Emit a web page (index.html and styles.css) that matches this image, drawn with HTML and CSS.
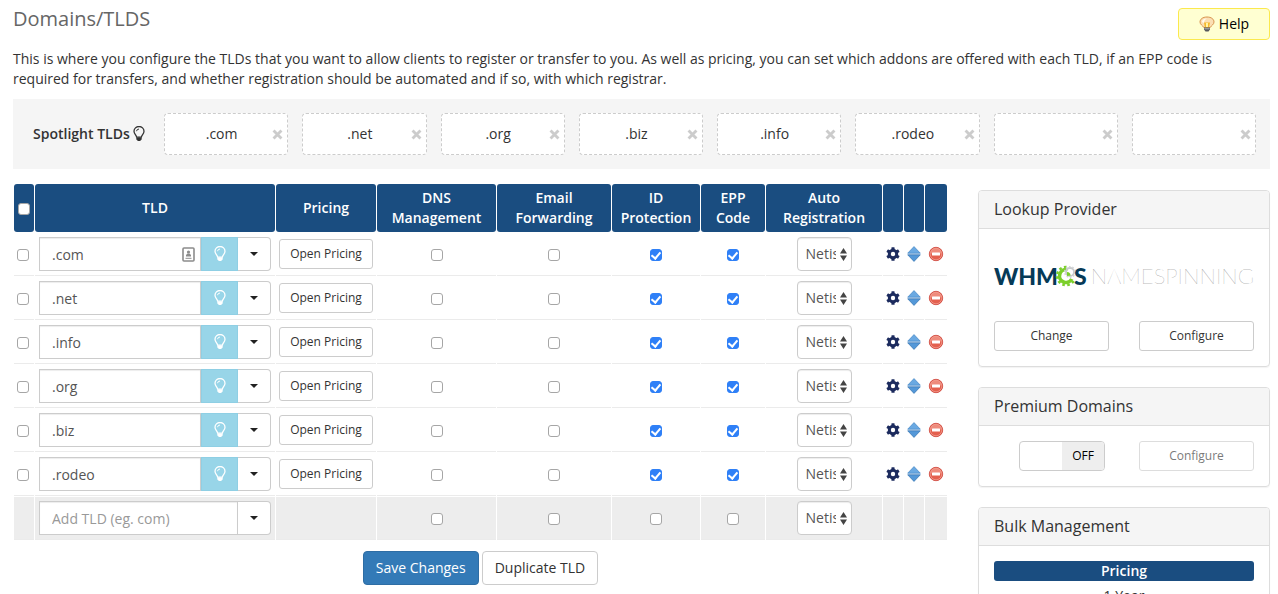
FILE: index.html
```html
<!DOCTYPE html>
<html lang="en">
<head>
<meta charset="utf-8">
<title>Domains/TLDS</title>
<link rel="stylesheet" href="styles.css">
</head>
<body>
<svg class="sprite" aria-hidden="true">
  <symbol id="bulb" viewBox="0 0 12 16">
    <path d="M3.6 11.2C3.4 8.9 1 8 1 5.200a5 4.700 0 0 1 10 0C11 8 8.600 8.900 8.400 11.200Z" fill="none" stroke="currentColor" stroke-width="1.300"/>
    <path d="M3.500 5.200Q3.700 3.200 6 3" fill="none" stroke="currentColor" stroke-width="1"/>
    <path d="M3.300 11.500h5.400v2.200H8L7.300 15H4.700L4 13.700H3.300Z" fill="currentColor"/>
  </symbol>
  <symbol id="cross" viewBox="0 0 10 10">
    <path d="M1.400 1.400 8.600 8.600M8.600 1.400 1.400 8.600" fill="none" stroke="currentColor" stroke-width="2.600"/>
  </symbol>
  <symbol id="caret" viewBox="0 0 8 4"><path d="M0 0h8L4 4Z" fill="currentColor"/></symbol>
  <symbol id="gear" viewBox="-7 -7 14 14">
    <g fill="#1c2b5e">
      <rect x="-1.600" y="-6.800" width="3.200" height="13.600" rx=".6"/>
      <rect x="-1.600" y="-6.800" width="3.200" height="13.600" rx=".6" transform="rotate(60)"/>
      <rect x="-1.600" y="-6.800" width="3.200" height="13.600" rx=".6" transform="rotate(120)"/>
      <circle r="5.200"/>
    </g>
    <circle r="2.200" fill="#fff"/>
  </symbol>
  <symbol id="sort" viewBox="0 0 14 16">
    <path d="M7 .6 13.300 7.200H.7Z" fill="#6aa9e2" stroke="#4a8cc9" stroke-width=".8"/>
    <path d="M.7 8.800H13.300L7 15.400Z" fill="#5498d8" stroke="#3a78b5" stroke-width=".8"/>
  </symbol>
  <symbol id="remove" viewBox="0 0 16 16">
    <circle cx="8" cy="8" r="6.700" fill="#e4604f" stroke="#cf4a3f" stroke-width=".9"/>
    <path d="M2.500 7.500a5.500 5.500 0 0 1 11 0Z" fill="#ee8b7c"/>
    <circle cx="8" cy="8" r="5.800" fill="none" stroke="#f4a397" stroke-width=".7"/>
    <rect x="4" y="6.600" width="8" height="2.800" rx=".5" fill="#fff"/>
  </symbol>
</svg>

<header class="page-head">
  <h1 class="page-title">Domains/TLDS</h1>
  <button type="button" class="help">
    <svg width="16" height="16" viewBox="0 0 16 16" aria-hidden="true">
      <path d="M8 1C3.600 1 1 3.200 1 6c0 2.600 2.600 3.300 3.800 5.500h6.400C12.400 9.300 15 8.600 15 6c0-2.800-2.600-5-7-5Z" fill="#fbdfb4" stroke="#d9954f"/>
      <path d="M3 6Q3.300 2.800 8 2.600 5 4 5 7Z" fill="#fffaf0"/>
      <path d="M5 6.500h6l-.8 5H5.800Z" fill="#f5b92e"/>
      <path d="M8 7v4" stroke="#fff3a5" stroke-width="2"/>
      <path d="M5 11.500h6v2L9.500 15.500h-3L5 13.500Z" fill="#55585d"/>
      <path d="M5.300 12.800h5.400" stroke="#c9cdd2" stroke-width=".8"/>
    </svg>
    Help
  </button>
</header>

<p class="intro">This is where you configure the TLDs that you want to allow clients to register or transfer to you. As well as pricing, you can set which addons are offered with each TLD, if an EPP code is required for transfers, and whether registration should be automated and if so, with which registrar.</p>

<section class="spotlight">
  <div class="spotlight-label">Spotlight TLDs <svg class="bulb" width="12" height="16"><use href="#bulb"/></svg></div>
  <ul class="slots" id="slots"></ul>
</section>

<div class="columns">
  <form class="main">
    <table class="tlds">
      <colgroup>
        <col class="w-tick"><col><col class="w-pricing"><col class="w-dns"><col class="w-email"><col class="w-id"><col class="w-epp"><col class="w-auto"><col class="w-icon"><col class="w-icon"><col class="w-last">
      </colgroup>
      <thead>
        <tr>
          <th><input type="checkbox" class="tick" aria-label="Select all"></th>
          <th>TLD</th><th>Pricing</th><th>DNS Management</th><th>Email Forwarding</th><th>ID Protection</th><th>EPP Code</th><th>Auto Registration</th><th></th><th></th><th></th>
        </tr>
      </thead>
      <tbody id="rows"></tbody>
    </table>
    <div class="actions">
      <button type="button" class="btn btn-primary">Save Changes</button>
      <button type="button" class="btn">Duplicate TLD</button>
    </div>
  </form>

  <aside class="side">
    <section class="panel">
      <h2 class="panel-title">Lookup Provider</h2>
      <div class="panel-body">
        <div class="logo">
          <span class="logo-bold">WHM</span>
          <svg class="logo-gear" width="22" height="22" viewBox="-11 -11 22 22" aria-label="C">
            <g fill="none" stroke="#7ccf2b">
              <path d="M1.500-6.300A6.500 6.500 0 1 0 5.800 3" stroke-width="3.600"/>
              <path d="M.5-9.100A9.100 9.100 0 1 0 8 4.400" stroke-width="2.400" stroke-dasharray="2.600 2.400"/>
            </g>
            <circle cx="4" cy="-4" r="4" fill="none" stroke="#c9cbcd" stroke-width="1.800"/>
            <circle cx="4" cy="-4" r="5.300" fill="none" stroke="#d2d4d6" stroke-width="1.400" stroke-dasharray="1.600 1.730"/>
            <path d="M1 0V-4A3.500 3.500 0 0 1 4.500-.5Z" fill="#7ccf2b"/>
          </svg>
          <span class="logo-bold">S</span>
          <span class="logo-thin">NAMESPINNING</span>
        </div>
        <div class="pair">
          <button type="button" class="btn btn-sm">Change</button>
          <button type="button" class="btn btn-sm">Configure</button>
        </div>
      </div>
    </section>
    <section class="panel">
      <h2 class="panel-title">Premium Domains</h2>
      <div class="panel-body pair">
        <button type="button" class="switch" role="switch" aria-checked="false" aria-label="Premium domains"><span class="switch-knob"></span><span class="switch-text">OFF</span></button>
        <button type="button" class="btn btn-sm" disabled>Configure</button>
      </div>
    </section>
    <section class="panel">
      <h2 class="panel-title">Bulk Management</h2>
      <div class="panel-body">
        <div class="bar">Pricing</div>
        <div class="term">1 Year</div>
      </div>
    </section>
  </aside>
</div>
<script src="app.js"></script>
</body>
</html>
```

FILE: styles.css
```css
* { box-sizing: border-box; }
body {
  margin: 0;
  padding: 8px 8px 0 13px;
  background: #fff;
  color: #333;
  font: 14px/20px "Open Sans", sans-serif;
}
button, input, select { font: inherit; color: inherit; margin: 0; }
button { cursor: pointer; }
svg { display: block; flex: none; }
.sprite { position: absolute; width: 0; height: 0; }

.page-head { display: flex; justify-content: space-between; align-items: flex-start; }
.page-title { margin: 0; font-size: 20px; line-height: 22px; font-weight: 400; color: #666; }
.help {
  display: flex; align-items: center; justify-content: center; gap: 4px;
  width: 92px; height: 32px; padding: 0;
  background: #ffffd2; border: 1px solid #fbe94e; border-radius: 4px; color: #000;
}
.intro { margin: 9px 0 10px; }

.spotlight { display: flex; align-items: center; padding: 14px 14px 14px 20px; background: #f5f5f5; }
.spotlight-label { display: flex; align-items: center; gap: 3px; flex: none; width: 131px; font-weight: 600; }
.slots { flex: 1; display: grid; grid-template-columns: repeat(8, minmax(0, 1fr)); gap: 14px; margin: 0; padding: 0; list-style: none; }
.slot { display: flex; align-items: center; height: 42px; padding: 0 4px 0 6px; background: #fff; border: 1px dashed #ccc; border-radius: 4px; }
.slot-name { flex: 1; text-align: center; }
.slot-clear { padding: 0; border: 0; background: none; color: #ccc; }

.columns { display: grid; grid-template-columns: minmax(0, 1fr) 292px; gap: 30px; align-items: start; padding-top: 14px; }

.tlds { width: 100%; table-layout: fixed; border-collapse: separate; border-spacing: 1px; }
.w-tick, .w-icon { width: 20px; }
.w-pricing { width: 100px; }
.w-dns { width: 119px; }
.w-email { width: 114px; }
.w-id { width: 88px; }
.w-epp { width: 64px; }
.w-auto { width: 116px; }
.w-last { width: 22px; }
.tlds th { height: 48px; padding: 4px 0; background: #1a4d80; color: #fff; font-weight: 600; border-radius: 3px; }
.tlds th:nth-child(n+4) { padding: 4px 12px; }
.tlds th:nth-child(6), .tlds th:nth-child(n+9) { padding: 4px 0; }
.tlds td { padding: 4px 0; text-align: center; border-bottom: 1px solid #ebebeb; }
.tlds td:first-child { padding-right: 2px; }
.tlds td:nth-child(2) { padding: 4px; }
.tlds .add-row td { background: #ededed; }
.tlds td svg { margin: 0 auto; }
.icon-btn { display: block; width: 100%; padding: 0; border: 0; background: none; }

.tick {
  appearance: none; display: block; width: 12px; height: 12px; margin: 2px auto 0;
  background: #fff; border: 1px solid #a6a6a6; border-radius: 3px;
}
.tick:checked { background: #2f80f7; border-color: #2f80f7; }
.tick:checked::after {
  content: ""; display: block; width: 4px; height: 7px; margin: 0 auto;
  border: solid #fff; border-width: 0 2px 2px 0; transform: rotate(40deg);
}

.group { display: flex; height: 34px; position: relative; }
.group-input {
  flex: 1; min-width: 0; padding: 2px 12px 0; color: #555; background: #fff;
  border: 1px solid #ccc; border-radius: 0; box-shadow: inset 0 1px 1px rgba(0,0,0,.075);
}
.group-input::placeholder { color: #999; opacity: 1; }
.group-spot { display: grid; place-items: center; width: 37px; padding: 0; background: #98d5e8; border: 1px solid #8fcfe4; color: #fff; }
.group-caret { display: grid; place-items: center; width: 33px; padding: 0; background: #fff; border: 1px solid #ccc; border-left: 0; border-radius: 0 4px 4px 0; color: #222; }
.keychain { position: absolute; right: 76px; top: 10px; }

.btn { height: 34px; padding: 0 12px; background: #fff; border: 1px solid #ccc; border-radius: 4px; color: #333; }
.btn-primary { background: #337ab7; border-color: #2e6da4; color: #fff; }
.btn-sm { height: 30px; padding: 0 10px; font-size: 12px; border-radius: 3px; }
.btn:disabled { opacity: .65; }

.registrar { position: relative; width: 55px; margin: 0 auto; }
.registrar select {
  appearance: none; display: block; width: 55px; height: 34px; padding: 0 15px 0 8px;
  border: 1px solid #ccc; border-radius: 4px; background: #fff; color: #555;
  box-shadow: inset 0 1px 1px rgba(0,0,0,.075); overflow: hidden; text-overflow: clip;
}
.registrar svg { position: absolute; right: 5px; top: 11px; pointer-events: none; }

.actions { display: flex; justify-content: center; gap: 3px; padding: 10px 0; }

.side { padding-top: 7px; }
.panel { margin-bottom: 20px; border: 1px solid #ddd; border-radius: 4px; box-shadow: 0 1px 1px rgba(0,0,0,.05); }
.panel-title { margin: 0; padding: 9px 15px 10px; background: #f5f5f5; border-bottom: 1px solid #ddd; border-radius: 3px 3px 0 0; font-size: 16px; line-height: 18px; font-weight: 400; }
.panel-body { padding: 15px; }
.pair { display: grid; grid-template-columns: 1fr 1fr; gap: 30px; }
.logo { display: flex; align-items: center; height: 64px; margin-bottom: 13px; font-family: Lato, sans-serif; font-size: 23px; line-height: 30px; }
.logo-bold { font-weight: 900; color: #063a57; }
.logo-gear { margin: 0 -3px; }
.logo-thin { margin-left: auto; font-size: 22px; font-weight: 100; color: #777; }
.switch { display: flex; justify-self: end; width: 86px; height: 30px; margin-right: 4px; padding: 0; overflow: hidden; background: #fff; border: 1px solid #ccc; border-radius: 4px; font-size: 12px; color: #000; }
.switch-knob { flex: 1; }
.switch-text { flex: 1; background: #eee; line-height: 28px; }
.bar { background: #1a4d80; border-radius: 3px; color: #fff; font-weight: 600; text-align: center; }
.term { margin-top: 5px; text-align: center; }
```

FILE: app.js
```js
const slots = ['.com', '.net', '.org', '.biz', '.info', '.rodeo', '', ''];
document.getElementById('slots').innerHTML = slots.map(name => `
  <li class="slot"><span class="slot-name">${name}</span>
    <button type="button" class="slot-clear" aria-label="Remove spotlight"><svg width="11" height="11"><use href="#cross"/></svg></button></li>`).join('');

const keychain = `<svg class="keychain" width="13" height="15" viewBox="0 0 13 15" aria-hidden="true">
  <rect x="1" y="1" width="11" height="13" rx="1" fill="#fff" stroke="#8c8c8c" stroke-width="1.600"/>
  <circle cx="6.500" cy="5" r="1.600" fill="#8c8c8c"/><path d="M4 9.500V8l1.500-1.500h2L9 8v1.500Z" fill="#8c8c8c"/><path d="M3.500 11.300h6" stroke="#8c8c8c"/></svg>`;

const tick = (label, on) => `<input type="checkbox" class="tick" aria-label="${label}"${on ? ' checked' : ''}>`;
const caret = '<button type="button" class="group-caret" aria-label="More options"><svg width="8" height="4"><use href="#caret"/></svg></button>';
const registrar = `<div class="registrar"><select aria-label="Auto registration"><option>Netistrar</option></select>
  <svg width="7" height="13" viewBox="0 0 7 13" aria-hidden="true"><path d="M0 5.500 3.500 0 7 5.500ZM0 7.500h7L3.500 13Z" fill="#444"/></svg></div>`;
const icon = (id, label, w, h) => `<td><button type="button" class="icon-btn" aria-label="${label}"><svg width="${w}" height="${h}"><use href="#${id}"/></svg></button></td>`;

const rows = ['.com', '.net', '.info', '.org', '.biz', '.rodeo'].map((tld, i) => `
  <tr>
    <td>${tick('Select ' + tld)}</td>
    <td><div class="group"><input class="group-input" type="text" value="${tld}" aria-label="TLD">${i === 0 ? keychain : ''}
      <button type="button" class="group-spot" aria-label="Spotlight"><svg width="12" height="16"><use href="#bulb"/></svg></button>${caret}</div></td>
    <td><button type="button" class="btn btn-sm">Open Pricing</button></td>
    <td>${tick('DNS management')}</td>
    <td>${tick('Email forwarding')}</td>
    <td>${tick('ID protection', true)}</td>
    <td>${tick('EPP code', true)}</td>
    <td>${registrar}</td>
    ${icon('gear', 'Settings', 14, 14)}${icon('sort', 'Move', 14, 16)}${icon('remove', 'Delete', 16, 16)}
  </tr>`);

rows.push(`
  <tr class="add-row">
    <td></td>
    <td><div class="group"><input class="group-input" type="text" placeholder="Add TLD (eg. com)" aria-label="Add TLD">${caret}</div></td>
    <td></td>
    <td>${tick('DNS management')}</td>
    <td>${tick('Email forwarding')}</td>
    <td>${tick('ID protection')}</td>
    <td>${tick('EPP code')}</td>
    <td>${registrar}</td>
    <td></td><td></td><td></td>
  </tr>`);
document.getElementById('rows').innerHTML = rows.join('');
```
